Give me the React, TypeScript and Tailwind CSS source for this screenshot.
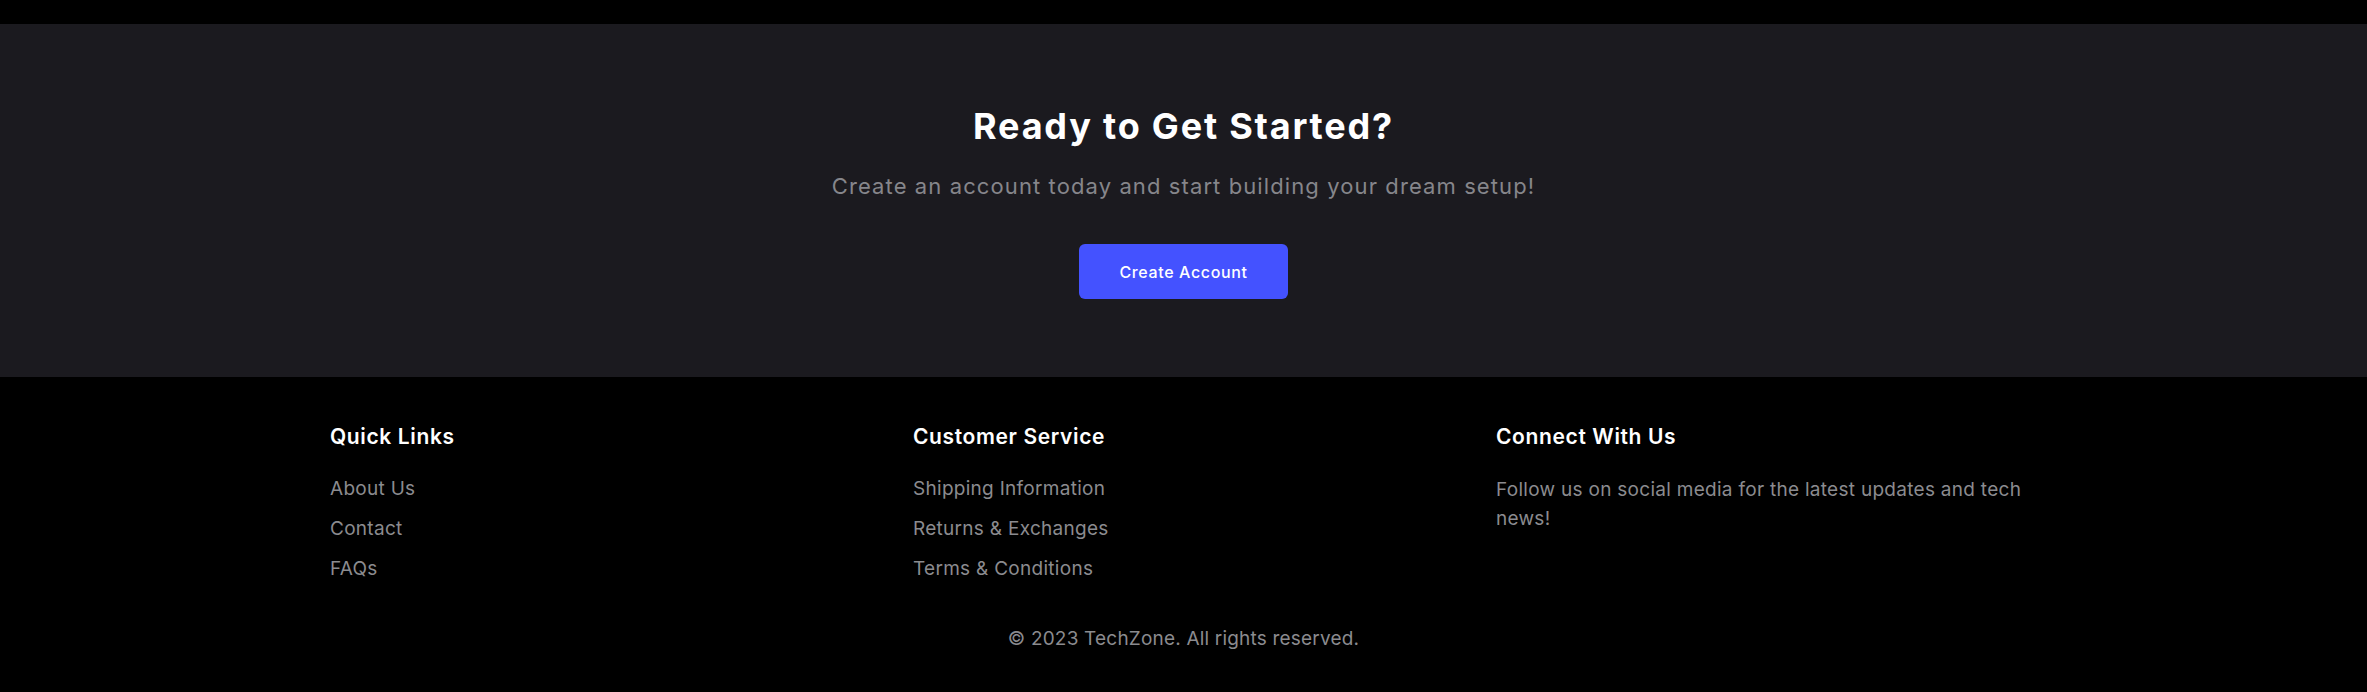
import React from "react";

const quickLinks = ["About Us", "Contact", "FAQs"];
const serviceLinks = ["Shipping Information", "Returns & Exchanges", "Terms & Conditions"];

const FooterColumn: React.FC<{ title: string; children: React.ReactNode }> = ({ title, children }) => (
  <div>
    <h3 className="text-[21px] font-semibold leading-7 tracking-[0.03em] text-white mb-6">{title}</h3>
    {children}
  </div>
);

const App: React.FC = () => {
  return (
    <div className="min-h-[692px] bg-black font-['Inter',sans-serif]">
      <div className="h-6 bg-black" />

      {/* call to action */}
      <section className="bg-[#1b1a1f] pt-[82px] pb-[78px] flex flex-col items-center text-center">
        <h2 className="text-4xl font-bold leading-10 text-white tracking-[0.05em]">Ready to Get Started?</h2>
        <p className="mt-[26px] text-[22px] leading-7 tracking-[0.05em] text-[#86868b]">
          Create an account today and start building your dream setup!
        </p>
        <button className="mt-[44px] h-[55px] px-10 rounded-md bg-[#4452ff] text-white text-base font-medium tracking-[0.04em] hover:bg-[#3a47e6] transition-colors">
          Create Account
        </button>
      </section>

      {/* footer */}
      <footer className="pt-[46px] pb-[39px]">
        <div className="mx-auto max-w-[1707px] grid grid-cols-3 gap-x-[42px]">
          <FooterColumn title="Quick Links">
            <ul className="space-y-3">
              {quickLinks.map((link) => (
                <li key={link}>
                  <a href="#" className="text-[19px] leading-7 tracking-[0.015em] text-[#8b8b8f] hover:text-white">
                    {link}
                  </a>
                </li>
              ))}
            </ul>
          </FooterColumn>
          <FooterColumn title="Customer Service">
            <ul className="space-y-3">
              {serviceLinks.map((link) => (
                <li key={link}>
                  <a href="#" className="text-[19px] leading-7 tracking-[0.015em] text-[#8b8b8f] hover:text-white">
                    {link}
                  </a>
                </li>
              ))}
            </ul>
          </FooterColumn>
          <FooterColumn title="Connect With Us">
            <p className="text-[19px] leading-[29px] tracking-[0.015em] text-[#8b8b8f]">
              Follow us on social media for the latest updates and tech news!
            </p>
          </FooterColumn>
        </div>
        <p className="mt-[42px] text-center text-[19px] leading-7 tracking-[0.01em] text-[#8b8b8f]">
          © 2023 TechZone. All rights reserved.
        </p>
      </footer>
    </div>
  );
};

export default App;
